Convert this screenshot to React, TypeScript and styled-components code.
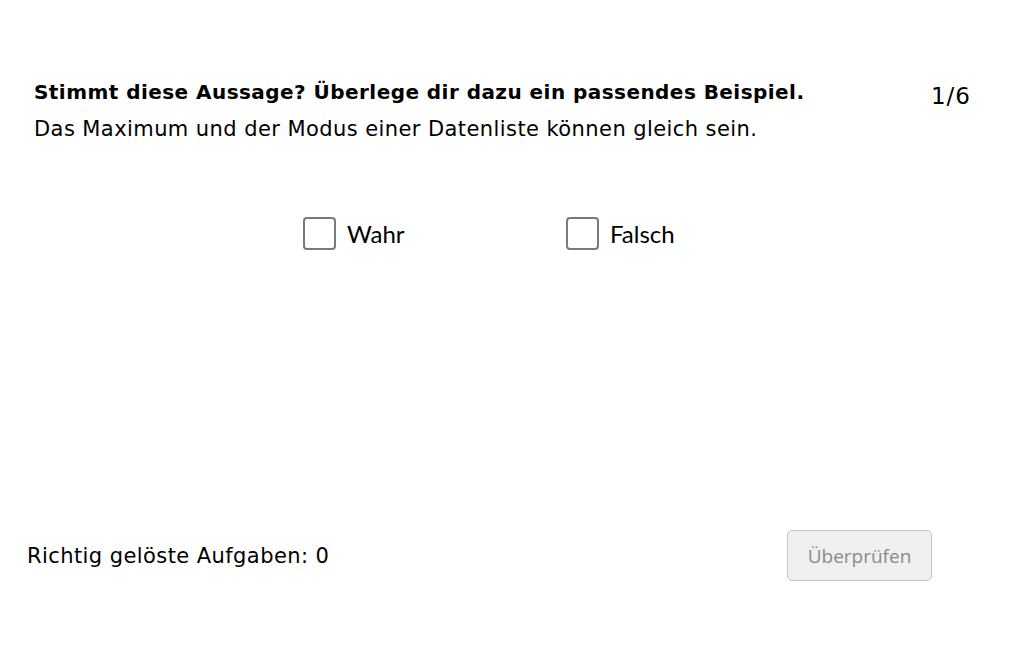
import React, { useState } from 'react';
import styled, { createGlobalStyle } from 'styled-components';

const GlobalStyle = createGlobalStyle`
  html, body {
    margin: 0;
    padding: 0;
    background: #fff;
  }
  body {
    font-family: "DejaVu Sans", "Liberation Sans", sans-serif;
    color: #000;
  }
`;

const Page = styled.div`
  width: 1032px;
  height: 645px;
  box-sizing: border-box;
  padding: 76px 100px 0 27px;
  display: flex;
  flex-direction: column;
`;

const Question = styled.div`
  padding-left: 7px;
  margin-right: -39px;
`;

const HeaderRow = styled.div`
  display: flex;
  justify-content: space-between;
  align-items: flex-start;
`;

const Title = styled.h2`
  margin: 0;
  font-size: 20px;
  line-height: 32px;
  font-weight: bold;
  letter-spacing: 0.45px;
`;

const Counter = styled.span`
  font-size: 23px;
  line-height: 32px;
  margin-top: 4px;
  letter-spacing: 1px;
`;

const Statement = styled.p`
  margin: 1px 0 0;
  font-size: 21px;
  line-height: 32px;
  letter-spacing: 0.42px;
`;

const Options = styled.div`
  display: grid;
  grid-template-columns: 263px 263px;
  margin: 72px 0 0 276px;
`;

const Option = styled.label`
  display: flex;
  align-items: center;
  gap: 11px;
  font-family: Lato, sans-serif;
  font-size: 24px;
  cursor: pointer;
`;

const Box = styled.span<{ checked: boolean }>`
  width: 29px;
  height: 29px;
  border: 2px solid #7a7a7a;
  border-radius: 4px;
  background: ${(p) => (p.checked ? '#7a7a7a' : '#fff')};
`;

const Footer = styled.div`
  margin-top: auto;
  margin-bottom: 64px;
  display: flex;
  justify-content: space-between;
  align-items: center;
`;

const Score = styled.span`
  font-size: 21px;
  letter-spacing: 0.42px;
`;

const CheckButton = styled.button`
  width: 145px;
  height: 51px;
  border: 1px solid #c4c4c4;
  border-radius: 5px;
  background: #efefef;
  color: #8a8a8a;
  font-family: "Open Sans", sans-serif;
  font-size: 19px;
`;

const App: React.FC = () => {
  const [answer, setAnswer] = useState<string | null>(null);

  return (
    <>
      <GlobalStyle />
      <Page>
        <Question>
          <HeaderRow>
            <Title>Stimmt diese Aussage? Überlege dir dazu ein passendes Beispiel.</Title>
            <Counter>1/6</Counter>
          </HeaderRow>
          <Statement>Das Maximum und der Modus einer Datenliste können gleich sein.</Statement>
        </Question>
        <Options>
          <Option onClick={() => setAnswer('wahr')}>
            <Box checked={answer === 'wahr'} />
            Wahr
          </Option>
          <Option onClick={() => setAnswer('falsch')}>
            <Box checked={answer === 'falsch'} />
            Falsch
          </Option>
        </Options>
        <Footer>
          <Score>Richtig gelöste Aufgaben: 0</Score>
          <CheckButton disabled>Überprüfen</CheckButton>
        </Footer>
      </Page>
    </>
  );
};

export default App;
